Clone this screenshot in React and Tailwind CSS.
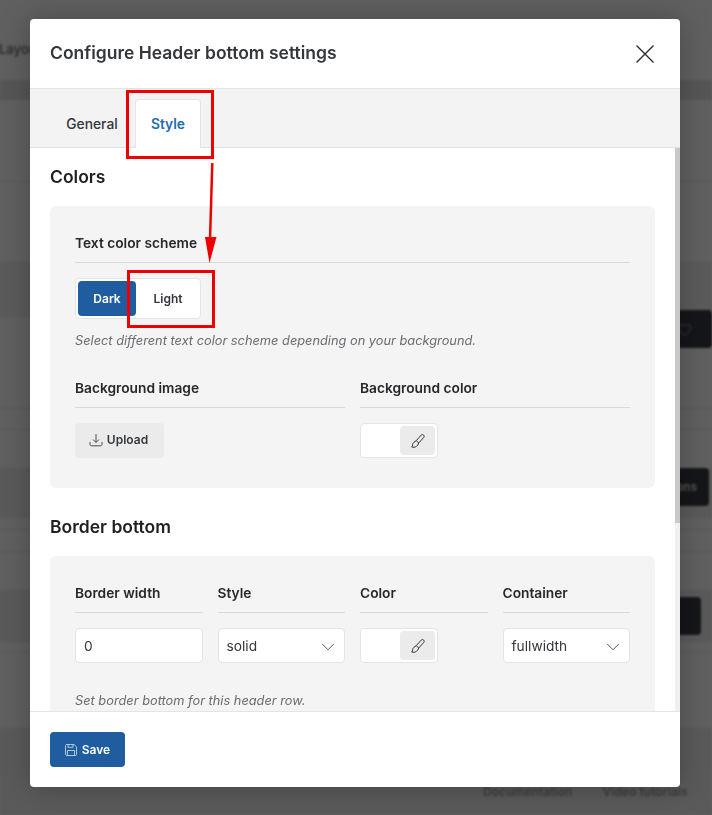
import { ChevronDown, Heart } from 'lucide-react'

function Label({ children }) {
  return (
    <div className="h-[30px] border-b border-[#d9d9d9] text-[13.75px] font-semibold leading-[20px] text-[#26282b]">
      {children}
    </div>
  )
}

function BrushIcon() {
  return (
    <svg width="16" height="16" viewBox="0 0 16 16" fill="none" stroke="#333" strokeWidth="1" strokeLinejoin="round">
      <path d="M11.2 2.1c.7-.7 1.8-.7 2.5 0 .6.7.6 1.7 0 2.4L8.7 10 6.3 7.6z" />
      <path d="M6.3 7.6L4 9.2c-1 .8-1.4 1.9-1.4 2.9 0 .7-.3 1.4-1 1.9 1.5.5 3.5.3 4.8-.6 1.1-.8 1.9-1.9 2.3-3.4" />
    </svg>
  )
}

function ColorPicker() {
  return (
    <div className="flex h-[35px] w-[78px] justify-end rounded-[4px] border border-[#e4e4e4] bg-white p-[2px]">
      <div className="flex w-[35px] items-center justify-center rounded-[4px] bg-[#ebebeb]">
        <BrushIcon />
      </div>
    </div>
  )
}

function Select({ value }) {
  return (
    <div className="flex h-[35px] items-center justify-between rounded-[4px] border border-[#e4e4e4] bg-white pl-[8px] pr-[5px] pt-[2px] text-[13.75px] text-[#33363a]">
      {value}
      <ChevronDown size={22} strokeWidth={0.9} />
    </div>
  )
}

function Note({ children }) {
  return <p className="text-[12.8px] italic leading-[18px] text-[#686b70]">{children}</p>
}

function Backdrop() {
  return (
    <div className="flex h-[815px] flex-col blur-[1px]">
      <div className="flex h-[80px] items-center pt-[20px] text-[13px] font-semibold text-[#2e2e2e]">
        <span className="-ml-px">Layout</span>
      </div>
      <div className="h-[20px] bg-[#565656]" />
      <div className="h-[82px] border-b border-[#585858]" />
      <div className="h-[81px] border-b border-[#585858]" />
      <div className="flex h-[55px] justify-end bg-[#5b5b5b]" />
      <div className="flex h-[90px] items-start justify-end">
        <div className="-mt-[8px] flex h-[38px] w-[50px] items-center gap-[6px] rounded-[4px] bg-[#151619] pl-[15px]">
          <Heart size={15} strokeWidth={1.4} className="shrink-0 text-[#444]" />
        </div>
      </div>
      <div className="h-[22px] border-y border-[#585858]" />
      <div className="flex h-[38px] items-center justify-end" />
      <div className="flex h-[50px] justify-end bg-[#5a5a5a] pr-[3px]">
        <div className="flex h-[38px] w-[60px] items-center justify-end rounded-[4px] bg-[#151619] pr-[12px] text-[12px] font-semibold text-[#555]">
          ons
        </div>
      </div>
      <div className="h-[12px] border-b border-[#585858]" />
      <div className="h-[22px] border-b border-[#585858]" />
      <div className="h-[38px]" />
      <div className="flex h-[52px] justify-end bg-[#5a5a5a] pr-[11px]">
        <div className="mt-[7px] h-[38px] w-[50px] rounded-[4px] bg-[#151619]" />
      </div>
      <div className="h-[10px] border-b border-[#585858]" />
      <div className="h-[76px]" />
      <div className="flex flex-1 items-end gap-[30px] bg-[#5a5a5a] pb-[14px] pl-[483px] text-[12.1px] font-semibold text-[#3c3c3c]">
        <span>Documentation</span>
        <span>Video tutorials</span>
      </div>
    </div>
  )
}

export default function App() {
  return (
    <div className="relative h-[815px] w-[712px] overflow-hidden bg-[#606060] font-['Inter',sans-serif]">
      <Backdrop />

      {/* Modal */}
      <div className="absolute left-[30px] top-[19px] flex h-[768px] w-[650px] flex-col overflow-hidden rounded-[4px] bg-white shadow-[0_0_30px_rgba(0,0,0,0.25)]">
        <div className="flex h-[70px] items-center justify-between border-b border-[#e4e4e4] pl-[20px] pr-[26px]">
          <h2 className="text-[17.5px] font-semibold text-[#33363a]">Configure Header bottom settings</h2>
          <svg width="18" height="18" viewBox="0 0 18 18" fill="none" stroke="#26282b" strokeWidth="1.3">
            <path d="M.5.5l17 17M17.5.5l-17 17" />
          </svg>
        </div>

        {/* Tabs */}
        <div className="flex h-[59px] items-end gap-[1px] border-b border-[#e0e0e0] bg-[#f3f3f3] pl-[20px]">
          <div className="flex h-[48px] w-[84px] items-center justify-center pt-[2px] text-[13.8px] font-medium text-[#33363a]">General</div>
          <div className="-mb-px flex h-[49px] w-[66px] items-center justify-center rounded-t-[4px] border border-b-0 border-[#e4e4e4] bg-white text-[13.8px] font-semibold text-[#1f6cb0]">Style</div>
        </div>

        {/* Scrolling body */}
        <div className="flex min-h-0 flex-1">
          <div className="min-w-0 flex-1 overflow-hidden pl-[20px] pr-[20px]">
            <h3 className="pt-[18px] text-[17.5px] font-semibold leading-[22px] text-[#1d1f23]">Colors</h3>
            <section className="mt-[18px] h-[282px] rounded-[6px] bg-[#f4f4f4] px-[25px] pt-[27px]">
              <Label>Text color scheme</Label>
              <div className="mt-[15px] flex h-[41px] w-[126px] rounded-[4px] border border-[#e4e4e4] bg-white p-[2px] text-[12px] font-semibold">
                <div className="flex w-[58px] items-center justify-center rounded-[4px] bg-[#1f5ca0] text-white">Dark</div>
                <div className="flex flex-1 items-center justify-center pl-[2px] text-[#33363a]">Light</div>
              </div>
              <div className="mt-[13px]">
                <Note>Select different text color scheme depending on your background.</Note>
              </div>
              <div className="mt-[28px] grid grid-cols-2 gap-[15px]">
                <div>
                  <Label>Background image</Label>
                  <div className="mt-[15px] flex h-[35px] w-[89px] items-center justify-center gap-[4px] rounded-[4px] bg-[#ebebeb] pb-[1px] pr-[2px] text-[12px] font-semibold text-[#33363a]">
                    <svg width="14" height="14" viewBox="0 0 14 14" fill="none" stroke="#3a3c3f" strokeWidth="0.9">
                      <path d="M7 1v8.2M4 6.5l3 3 3-3M1 9v2.2c0 1 .7 1.6 1.6 1.6h8.8c.9 0 1.6-.6 1.6-1.6V9" />
                    </svg>
                    Upload
                  </div>
                </div>
                <div>
                  <Label>Background color</Label>
                  <div className="mt-[15px]"><ColorPicker /></div>
                </div>
              </div>
            </section>

            <h3 className="pt-[28px] text-[17.5px] font-semibold leading-[22px] text-[#1d1f23]">Border bottom</h3>
            <section className="mt-[18px] h-[200px] rounded-[6px] bg-[#f4f4f4] px-[25px] pt-[27px]">
              <div className="grid grid-cols-4 gap-[15px]">
                <div>
                  <Label>Border width</Label>
                  <div className="mt-[15px] flex h-[35px] items-center rounded-[4px] border border-[#e4e4e4] bg-white pl-[8px] pt-[2px] text-[13.75px] text-[#33363a]">0</div>
                </div>
                <div>
                  <Label>Style</Label>
                  <div className="mt-[15px]"><Select value="solid" /></div>
                </div>
                <div>
                  <Label>Color</Label>
                  <div className="mt-[15px]"><ColorPicker /></div>
                </div>
                <div>
                  <Label>Container</Label>
                  <div className="mt-[15px]"><Select value="fullwidth" /></div>
                </div>
              </div>
              <div className="mt-[29px]">
                <Note>Set border bottom for this header row.</Note>
              </div>
            </section>
          </div>
          {/* Scrollbar */}
          <div className="w-[5px] bg-[#f0f0f0]">
            <div className="h-[375px] bg-[#c8c8c8]" />
          </div>
        </div>

        <div className="flex h-[76px] items-center border-t border-[#e4e4e4] pl-[20px]">
          <button className="flex h-[35px] w-[75px] items-center justify-center gap-[5px] rounded-[4px] bg-[#1f5ca0] text-[12px] font-semibold text-white">
            <svg width="12" height="12" viewBox="0 0 12 12" fill="none" stroke="#d5e2f0" strokeWidth="0.8">
              <path d="M.5 1.6c0-.6.5-1.1 1.1-1.1h7.5l2.4 2.4v7.5c0 .6-.5 1.1-1.1 1.1H1.6c-.6 0-1.1-.5-1.1-1.1z" />
              <path d="M3 .5v2.8h5V.5M2.5 11.5V6.5h7v5" />
            </svg>
            Save
          </button>
        </div>
      </div>

      {/* Red annotations */}
      <div className="absolute left-[126px] top-[90px] h-[69px] w-[88px] border-[3px] border-[#ee0000]" />
      <div className="absolute left-[127px] top-[270px] h-[58px] w-[88px] border-[3px] border-[#ee0000]" />
      <svg className="absolute left-[195px] top-[155px]" width="30" height="112" viewBox="0 0 30 112" fill="none">
        <path d="M17.3 8 L15 85" stroke="#ee0000" strokeWidth="2.5" />
        <path d="M10 82 L21.5 82 L14.5 108 Z" fill="#ee0000" />
      </svg>
    </div>
  )
}
